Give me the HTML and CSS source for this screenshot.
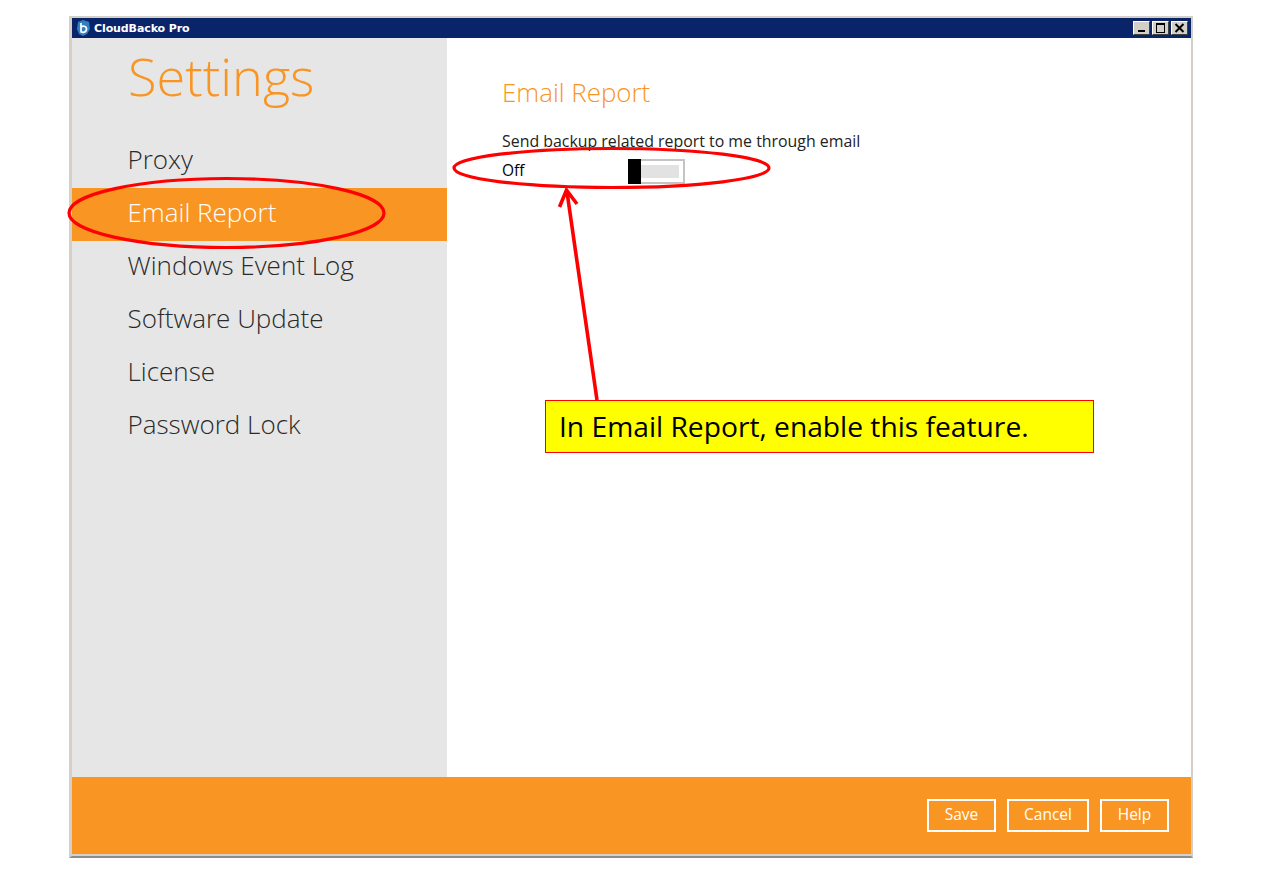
FILE: index.html
```html
<!DOCTYPE html>
<html lang="en">
<head>
<meta charset="utf-8">
<title>CloudBacko Pro</title>
<link rel="stylesheet" href="styles.css">
</head>
<body>
<div class="window">
  <div class="titlebar">
    <svg class="app-icon" width="15" height="16" viewBox="0 0 15 16">
      <path d="M2 2 L7 0 L13 2 L14 9 L11 14 L7 16 L3 14 L1 9 Z" fill="#2f7fc1"/>
      <path d="M5 3 V11.5 M5 7 C8 5 11 7 10.5 9.5 C10 12.5 7 13 4.5 11.5" fill="none" stroke="#fff" stroke-width="1.7"/>
    </svg>
    <span class="app-name">CloudBacko Pro</span>
    <div class="controls">
      <span class="ctl"><svg width="15" height="12" viewBox="0 0 15 12"><rect x="4" y="8" width="7" height="2" fill="#000"/></svg></span>
      <span class="ctl"><svg width="15" height="12" viewBox="0 0 15 12"><rect x="3.5" y="1.5" width="8" height="9" fill="none" stroke="#000"/><rect x="3" y="1" width="9" height="2" fill="#000"/></svg></span>
      <span class="ctl"><svg width="15" height="12" viewBox="0 0 15 12"><path d="M3.5 2 L11.5 10 M11.5 2 L3.5 10" stroke="#000" stroke-width="2"/></svg></span>
    </div>
  </div>
  <div class="body">
    <aside class="sidebar">
      <h1 class="side-title">Settings</h1>
      <nav class="menu">
        <div class="menu-item">Proxy</div>
        <div class="menu-item active">Email Report</div>
        <div class="menu-item">Windows Event Log</div>
        <div class="menu-item">Software Update</div>
        <div class="menu-item">License</div>
        <div class="menu-item">Password Lock</div>
      </nav>
    </aside>
    <main class="content">
      <h2 class="content-title">Email Report</h2>
      <p class="desc">Send backup related report to me through email</p>
      <div class="toggle-row">
        <span class="toggle-label">Off</span>
        <span class="toggle"><span class="knob"></span><span class="track"></span></span>
      </div>
    </main>
  </div>
  <footer class="footer">
    <button class="btn btn-save">Save</button>
    <button class="btn btn-cancel">Cancel</button>
    <button class="btn btn-help">Help</button>
  </footer>
</div>
<svg class="annotations" width="1268" height="888" viewBox="0 0 1268 888">
  <ellipse cx="226.5" cy="213" rx="157.5" ry="34.5" fill="none" stroke="#f00" stroke-width="3.2"/>
  <ellipse cx="611.5" cy="168" rx="157.5" ry="19.5" fill="none" stroke="#f00" stroke-width="3.2"/>
  <path d="M597 400 L567 192 M559.5 207 L566.5 190 L577 204" fill="none" stroke="#f00" stroke-width="3.6"/>
</svg>
<div class="callout">In Email Report, enable this feature.</div>
</body>
</html>
```
FILE: styles.css
```css
* { box-sizing: border-box; }
html, body { margin: 0; padding: 0; background: #fff; }
body { width: 1268px; height: 888px; padding: 16px 0 0 69px; font-family: "Open Sans", sans-serif; overflow: hidden; }
.window {
  width: 1124px; height: 842px;
  border: 2px solid #d4d0c8; border-left-width: 3px; border-bottom: 2px solid #8c8c8c;
  padding-bottom: 2px;
  display: flex; flex-direction: column;
  background: #d4d0c8;
}
.titlebar {
  height: 20px; flex: none; background: #0a246a; color: #fff;
  display: flex; align-items: center; padding: 0 3px 0 4px;
}
.app-icon { margin-right: 3px; }
.app-name { font: bold 11px "DejaVu Sans", sans-serif; letter-spacing: -0.1px; }
.controls { margin-left: auto; display: flex; gap: 2px; }
.ctl {
  width: 17px; height: 14px; background: #d4d0c8; display: flex;
  border: 1px solid; border-color: #fff #404040 #404040 #fff;
  align-items: center; justify-content: center; overflow: hidden;
}
.ctl svg { flex: none; }
.body { flex: 1; display: flex; min-height: 0; }
.sidebar { width: 375px; flex: none; background: #e6e6e6; }
.side-title {
  margin: 0; padding: 4px 0 0 56px; height: 97px;
  font-size: 52.3px; font-weight: 300; line-height: 68px; color: #f99522;
}
.menu-item {
  height: 53px; padding-left: 55.5px;
  font-size: 26px; font-weight: 300; line-height: 49px; color: #2a2a2a;
}
.menu-item.active { background: #f99522; color: #fff; }
.content { flex: 1; background: #fff; padding: 37px 0 0 55px; }
.content-title { margin: 0; font-size: 25.9px; font-weight: 300; line-height: 34px; color: #f99522; }
.desc { margin: 21px 0 0; font-size: 15.9px; line-height: 22px; color: #222; }
.toggle-row { display: flex; align-items: center; height: 26px; margin-top: 5px; }
.toggle-label { width: 126px; font-size: 15.5px; color: #000; font-weight: 500; }
.toggle {
  width: 57px; height: 25px; margin-top: 2px; border: 2px solid #c4c4c4; border-left: 0;
  display: flex; background: #fff;
}
.knob { width: 13px; background: #000; margin: -2px 0; flex: none; }
.track { width: 38px; height: 13px; background: #e2e2e2; margin: 4px 0 0 0; }
.footer {
  height: 77px; flex: none; background: #f99522;
  display: flex; justify-content: flex-end; align-items: flex-start;
  gap: 11px; padding: 22px 22px 0 0;
}
.btn {
  height: 33px; padding: 0 0 3px; background: transparent; border: 2px solid #fff; border-radius: 0;
  color: #fff; font: 400 15.5px "Open Sans", sans-serif;
}
.btn-save { width: 69px; }
.btn-cancel { width: 82px; }
.btn-help { width: 69px; }
.annotations { position: absolute; left: 0; top: 0; pointer-events: none; }
.callout {
  position: absolute; left: 545px; top: 400px; width: 549px; height: 53px;
  background: #ff0; border: 1px solid #f00;
  padding-left: 13px; font-size: 28.2px; line-height: 51px; color: #000; white-space: nowrap;
}
```
